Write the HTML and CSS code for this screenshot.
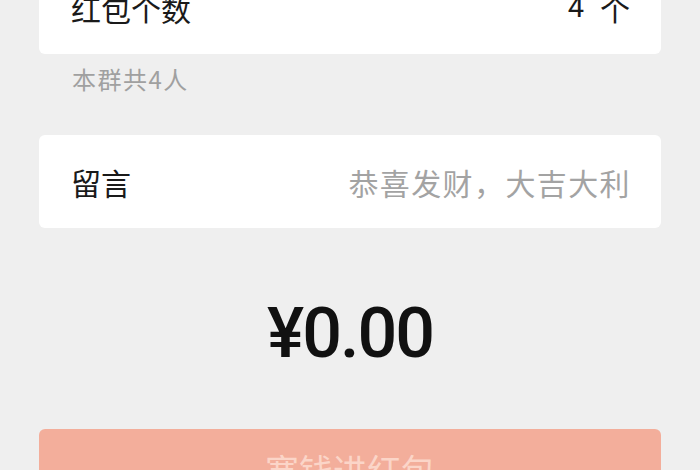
FILE: index.html
```html
<!DOCTYPE html>
<html lang="zh">
<head>
<meta charset="utf-8">
<title>发红包</title>
<link rel="stylesheet" href="styles.css">
</head>
<body>
<div class="page">
  <div class="card row">
    <span class="label">红包个数</span>
    <span class="value"><span class="num">4</span><span class="unit">个</span></span>
  </div>
  <div class="hint">本群共4人</div>
  <div class="card row">
    <span class="label">留言</span>
    <span class="placeholder">恭喜发财，大吉大利</span>
  </div>
  <div class="amount">¥0.00</div>
  <div class="button">塞钱进红包</div>
</div>
</body>
</html>
```

FILE: styles.css
```css
html, body {
  margin: 0;
  padding: 0;
  background: #efefef;
  overflow: hidden;
}
body {
  width: 700px;
  height: 470px;
  font-family: "Noto Sans CJK SC", "Noto Sans", sans-serif;
}
.page {
  margin-top: -39px;
  padding: 0 39px;
  display: flex;
  flex-direction: column;
}
.card {
  background: #ffffff;
  border-radius: 6px;
  height: 93px;
  box-sizing: border-box;
  padding: 0 31px 0 32px;
}
.row {
  display: flex;
  align-items: center;
  justify-content: space-between;
}
.label {
  font-size: 30px;
  color: #1a1a1a;
  line-height: 1;
}
.value {
  display: flex;
  align-items: center;
  font-size: 30px;
  color: #1a1a1a;
  line-height: 1;
}
.num {
  font-family: "Roboto", "Noto Sans", sans-serif;
  font-size: 29px;
}
.unit {
  margin-left: 16px;
}
.placeholder {
  font-size: 30px;
  color: #a3a3a3;
  line-height: 1;
  letter-spacing: 1.4px;
  margin-right: -1px;
}
.hint {
  font-size: 24px;
  line-height: 24px;
  letter-spacing: 1.5px;
  color: #a0a0a0;
  padding: 13px 0 44px 33px;
}
.amount {
  margin-top: 70px;
  text-align: center;
  font-family: "Roboto", "Noto Sans", sans-serif;
  font-weight: 500;
  font-size: 70px;
  line-height: 70px;
  letter-spacing: -2px;
  color: #111111;
}
.button {
  margin-top: 61px;
  height: 80px;
  background: #f3ae9b;
  border-radius: 6px;
  display: flex;
  align-items: center;
  justify-content: center;
  font-size: 34px;
  color: #fbd5c8;
}
```
